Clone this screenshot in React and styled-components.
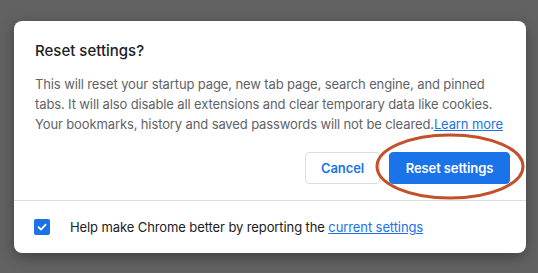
import React from "react";
import styled, { createGlobalStyle } from "styled-components";

const Global = createGlobalStyle`
  html, body {
    margin: 0;
    padding: 0;
    background: #626262;
  }
  body {
    font-family: Inter, "Liberation Sans", Arial, sans-serif;
    -webkit-font-smoothing: antialiased;
  }
`;

const Page = styled.div`
  width: 538px;
  height: 273px;
  padding: 21px 0 0 14px;
  box-sizing: border-box;
`;

const Dialog = styled.div`
  position: relative;
  width: 512px;
  height: 232px;
  background: #fff;
  border-radius: 8px;
  box-shadow: 0 4px 14px rgba(0, 0, 0, 0.35);
  display: flex;
  flex-direction: column;
  box-sizing: border-box;
`;

const Main = styled.div`
  padding: 20px 16px 16px 21px;
  border-bottom: 1px solid #dadce0;
`;

const Title = styled.h2`
  margin: 0;
  font-size: 15px;
  line-height: 20px;
  font-weight: 500;
  color: #202124;
`;

const Body = styled.p`
  margin: 13px 0 0;
  font-size: 13px;
  line-height: 20px;
  color: #5f6368;
  letter-spacing: -0.12px;
`;

const Line = styled.span`
  display: block;
  white-space: nowrap;
`;

const Link = styled.a`
  color: #1a73e8;
  text-decoration: underline;
  cursor: pointer;
`;

const Actions = styled.div`
  margin-top: 18px;
  display: flex;
  justify-content: flex-end;
  gap: 9px;
`;

const Button = styled.button`
  width: ${(p) => p.w}px;
  height: 32px;
  padding: 0;
  border-radius: 4px;
  font-family: inherit;
  font-size: 13px;
  font-weight: 600;
  letter-spacing: -0.1px;
  cursor: pointer;
  border: 1px solid ${(p) => (p.primary ? "#1a73e8" : "#dadce0")};
  background: ${(p) => (p.primary ? "#1a73e8" : "#fff")};
  color: ${(p) => (p.primary ? "#fff" : "#1a73e8")};
`;

const Footer = styled.div`
  flex: 1;
  display: flex;
  align-items: center;
  gap: 20px;
  padding: 0 20px;
  font-size: 13px;
  color: #202124;
  letter-spacing: -0.1px;
`;

const Box = styled.span`
  width: 16px;
  height: 16px;
  border-radius: 2px;
  background: #1a73e8;
  display: flex;
  align-items: center;
  justify-content: center;
`;

const Ring = styled.svg`
  position: absolute;
  left: 359px;
  top: 110px;
  pointer-events: none;
`;

export default function App() {
  return (
    <Page>
      <Global />
      <Dialog>
        <Main>
          <Title>Reset settings?</Title>
          <Body>
            <Line>This will reset your startup page, new tab page, search engine, and pinned</Line>
            <Line>tabs. It will also disable all extensions and clear temporary data like cookies.</Line>
            <Line>
              Your bookmarks, history and saved passwords will not be cleared.<Link>Learn more</Link>
            </Line>
          </Body>
          <Actions>
            <Button w={75}>Cancel</Button>
            <Button primary w={121}>Reset settings</Button>
          </Actions>
        </Main>
        <Footer>
          <Box>
            <svg width="12" height="12" viewBox="0 0 12 12">
              <path d="M2.5 6.2 L5 8.6 L9.6 3.6" fill="none" stroke="#fff" strokeWidth="1.8" strokeLinecap="round" strokeLinejoin="round" />
            </svg>
          </Box>
          <span>
            Help make Chrome better by reporting the <Link>current settings</Link>
          </span>
        </Footer>
        <Ring width="154" height="70" viewBox="0 0 154 70">
          <ellipse cx="77" cy="35.5" rx="73" ry="31.5" fill="none" stroke="#c2512a" strokeWidth="3" />
        </Ring>
      </Dialog>
    </Page>
  );
}
